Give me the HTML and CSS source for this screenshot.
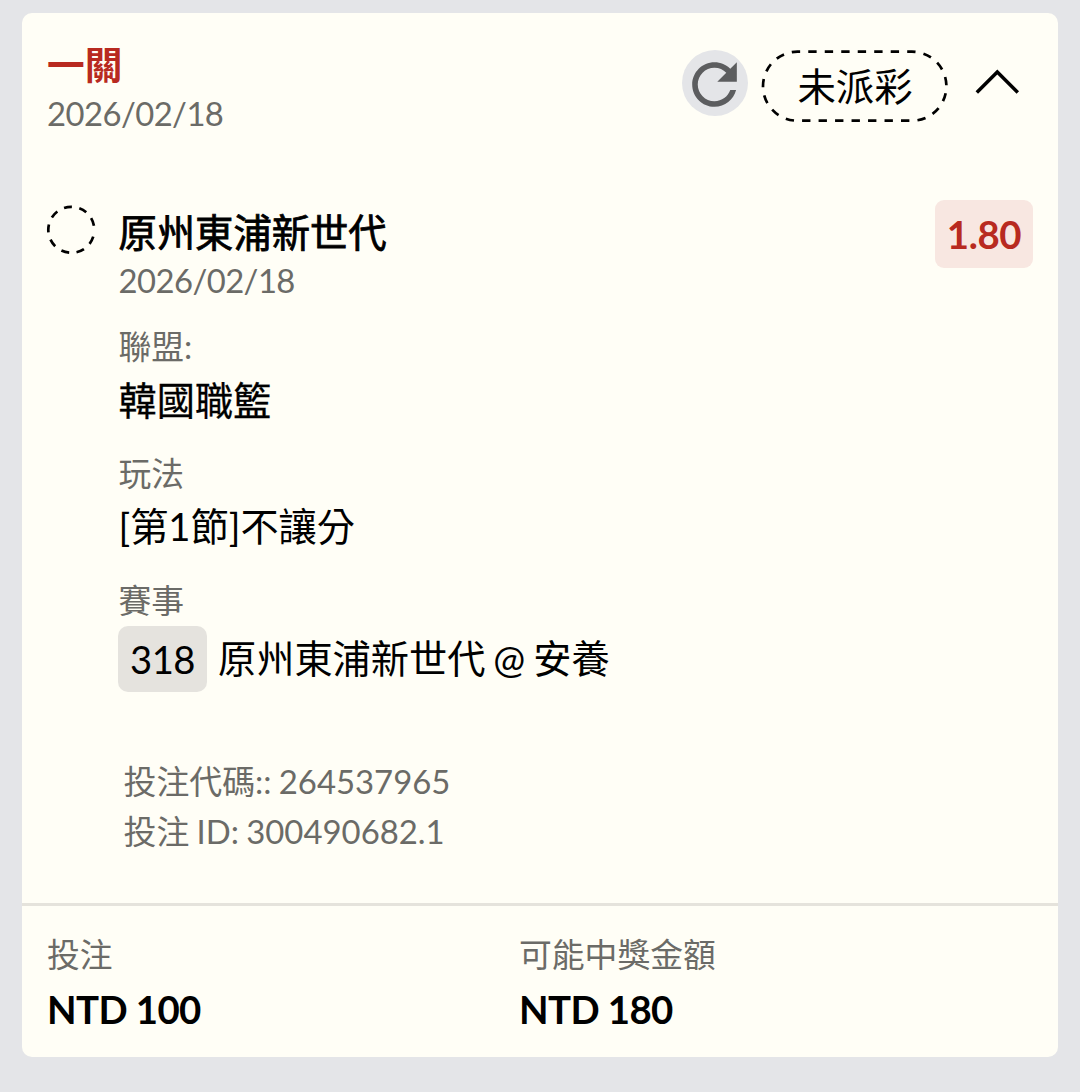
FILE: index.html
```html
<!DOCTYPE html>
<html lang="zh-Hant">
<head>
<meta charset="utf-8">
<title>投注紀錄</title>
<link rel="stylesheet" href="styles.css">
</head>
<body>
<article class="card">
  <header class="card-header">
    <div class="heading">
      <h1 class="title">一關</h1>
      <div class="muted date">2026/02/18</div>
    </div>
    <div class="actions">
      <button class="refresh" aria-label="重新整理">
        <svg width="67" height="67" viewBox="0 0 24 24"><path d="M17.65 6.35C16.2 4.9 14.21 4 12 4c-4.42 0-7.99 3.58-7.99 8s3.57 8 7.99 8c3.73 0 6.84-2.55 7.73-6h-2.08c-.82 2.33-3.04 4-5.65 4-3.31 0-6-2.69-6-6s2.69-6 6-6c1.66 0 3.14.69 4.22 1.78L13 11h7V4l-2.35 2.35z" fill="#5c5d5f"/></svg>
      </button>
      <div class="status">
        <svg class="status-outline" width="188" height="73" viewBox="0 0 188 73"><rect x="2" y="1.7" width="183.4" height="69" rx="34.5" pathLength="446.85" fill="none" stroke="#000" stroke-width="2.7" stroke-dasharray="8.4 8.15" stroke-dashoffset="-10.8"/></svg>
        <span class="status-text">未派彩</span>
      </div>
      <svg class="chevron" width="46" height="28" viewBox="0 0 46 28"><path d="M2.8 24.4 23.3 4 43.8 24.4" fill="none" stroke="#000" stroke-width="3.5"/></svg>
    </div>
  </header>

  <section class="pick">
    <svg class="pending" width="50" height="50" viewBox="0 0 50 50"><circle cx="25.3" cy="24.8" r="23" fill="none" stroke="#000" stroke-width="2.7" stroke-dasharray="8 7.55" stroke-dashoffset="-7"/></svg>
    <div class="pick-body">
      <h2 class="team">原州東浦新世代</h2>
      <div class="muted date">2026/02/18</div>
      <dl class="details">
        <div class="detail"><dt class="muted">聯盟:</dt><dd class="value league">韓國職籃</dd></div>
        <div class="detail"><dt class="muted">玩法</dt><dd class="value">[第1節]不讓分</dd></div>
        <div class="detail"><dt class="muted">賽事</dt><dd class="value match-row"><span class="code">318</span><span class="match-name">原州東浦新世代 @ 安養</span></dd></div>
      </dl>
      <div class="ids">
        <div>投注代碼:: 264537965</div>
        <div>投注 ID: 300490682.1</div>
      </div>
    </div>
    <div class="odds">1.80</div>
  </section>

  <footer class="totals">
    <div><div class="muted">投注</div><div class="amount">NTD 100</div></div>
    <div><div class="muted">可能中獎金額</div><div class="amount">NTD 180</div></div>
  </footer>
</article>
</body>
</html>
```
FILE: styles.css
```css
* {
  box-sizing: border-box;
  margin: 0;
  padding: 0;
}

body {
  height: 1092px;
  padding: 13px 22px 35px;
  background: #e4e5e8;
  color: #000;
  font-family: Lato, "Noto Sans CJK TC", sans-serif;
  font-size: 38.4px;
  line-height: 48px;
}

svg {
  display: block;
}

.card {
  display: flex;
  flex-direction: column;
  height: 1044px;
  border-radius: 10px;
  background: #fffef6;
}

.card-header {
  display: flex;
  justify-content: space-between;
  height: 186px;
  padding: 28px 38px 0 25px;
}

.title {
  color: #b82a20;
  font-size: 37.7px;
  font-weight: 700;
}

.muted {
  height: 40px;
  color: #6b6b67;
  font-size: 32.8px;
  line-height: 42px;
}

.date {
  margin-top: 4px;
  letter-spacing: -0.55px;
}

.actions {
  display: flex;
  align-items: flex-start;
  padding-top: 9px;
}

.refresh {
  width: 66px;
  height: 66px;
  border: 0;
  border-radius: 50%;
  background: #e4e5e8;
}

.refresh svg {
  margin: 1px 0 0 -1px;
}

.status {
  position: relative;
  width: 188px;
  height: 73px;
  margin-left: 13px;
  text-align: center;
}

.status-outline {
  position: absolute;
  inset: 0;
}

.status-text {
  line-height: 73px;
}

.chevron {
  margin: 18px 0 0 25px;
}

.pick {
  display: flex;
  align-items: flex-start;
  height: 704px;
  padding: 0 25px 0 24px;
}

.pending {
  margin-top: 6px;
}

.pick-body {
  flex: 1;
  padding: 9px 0 0 22.5px;
}

.team {
  font-size: 38.3px;
  font-weight: 400;
  -webkit-text-stroke: 0.8px currentColor;
}

.details {
  display: grid;
  gap: 30px;
  margin-top: 26px;
}

.value {
  margin-top: 9px;
  font-size: 38.2px;
}

.league {
  margin: 10px 0 -1px;
  -webkit-text-stroke: 0.3px currentColor;
}

.match-row {
  display: flex;
  align-items: flex-start;
  gap: 11px;
  margin: 6px 0 0 -0.5px;
}

.code {
  width: 89px;
  height: 66px;
  border-radius: 10px;
  background: #e5e3de;
  letter-spacing: -0.5px;
  line-height: 67px;
  text-align: center;
}

.match-name {
  line-height: 65px;
  word-spacing: -1.8px;
}

.ids {
  margin-top: 65px;
  padding-left: 5px;
  color: #6b6b67;
  font-size: 32.9px;
  line-height: 50px;
  word-spacing: -1.2px;
}

.odds {
  width: 98px;
  height: 68px;
  margin-top: 1px;
  border-radius: 9px;
  background: #f8e7e1;
  color: #b82a20;
  font-weight: 700;
  letter-spacing: -0.4px;
  line-height: 69px;
  text-align: center;
}

.totals {
  display: grid;
  grid-template-columns: 472px 1fr;
  flex: 1;
  padding: 28px 25px 0;
  border-top: 3px solid #e5e3dc;
}

.amount {
  margin-top: 11px;
  font-weight: 700;
  letter-spacing: -0.6px;
}
```
